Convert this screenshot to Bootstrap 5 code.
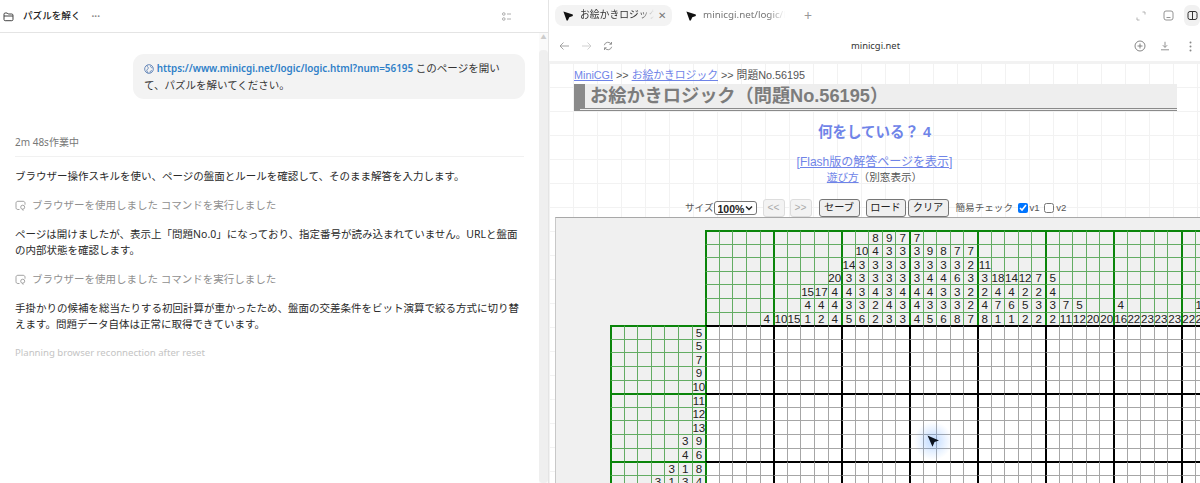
<!doctype html>
<html lang="ja">
  <head>
    <meta charset="UTF-8" />
    <meta name="viewport" content="width=device-width, initial-scale=1" />
    <title>パズルを解く</title>
    <link href="https://cdn.jsdelivr.net/npm/bootstrap@5.3.0/dist/css/bootstrap.min.css" rel="stylesheet" />
    <style>
      html, body { height: 483px; overflow: hidden; }
      body { font-family: "Noto Sans", "Noto Sans CJK JP", sans-serif; font-size: 10.5px; color: #333; background: #fff; }

      /* left: chat pane */
      .chat-pane { width: 549px; height: 483px; flex: none; border-right: 1px solid #e4e4e4; }
      .chat-head { height: 33px; padding: 0 37px 0 3px; border-bottom: 1px solid #e4e4e4; }
      .chat-title { font-size: 9.6px; font-weight: 500; color: #222; margin-left: 9px; }
      .chat-dots { margin-left: 11px; color: #888; font-size: 10px; line-height: 1; font-weight: 700; }
      .chat-body { padding: 21px 15px 0; width: 539px; height: 450px; }
      .chat-scroll { width: 9px; background: #fafafa; height: 450px; }
      .chat-scroll-up { height: 17px; color: #ccc; font-size: 6px; }
      .chat-scroll-thumb { background: #efefef; border-radius: 4px; }
      .bubble { width: 392px; height: 45px; margin-left: 118px; padding: 6px 11px; background: #f3f3f3; border-radius: 11px; line-height: 17px; }
      .bubble a { color: #2f80c8; font-weight: 600; text-decoration: none; font-size: 9.9px; }
      .work-time { margin-top: 36px; padding-bottom: 6px; color: #777; font-size: 10px; line-height: 15px; border-bottom: 1px solid #f1f1f1; }
      .chat-text { margin: 0; line-height: 16.5px; color: #2a2a2a; }
      .first-text { margin-top: 11px; }
      .tool-row { margin: 12px 0 12px; line-height: 17px; color: #8f8f8f; }
      .tool-row svg { margin-right: 6px; }
      .fade-text { margin-top: 12px; line-height: 16px; color: #c4c4c4; font-size: 9.6px; }

      /* right: browser pane */
      .browser-pane { min-width: 0; height: 483px; }
      .tab-bar { height: 31px; padding: 5px 0 0 6px; }
      .tab-item { height: 21px; padding-left: 8px; border-radius: 8px; font-size: 9.8px; color: #333; }
      .tab-active { width: 117px; background: #f3f3f3; }
      .tab-other { width: 120px; margin-left: 6px; color: #777; }
      .tab-text { margin-left: 7px; width: 74px; overflow: hidden; white-space: nowrap; -webkit-mask-image: linear-gradient(90deg, #000 80%, transparent); mask-image: linear-gradient(90deg, #000 80%, transparent); }
      .tab-other .tab-text { width: 82px; }
      .tab-x { margin-left: 4px; color: #777; font-size: 10px; }
      .tab-plus { margin-left: 6px; color: #999; font-size: 14px; line-height: 1; }
      .win-group { height: 21px; }
      .win-btn { width: 27px; height: 21px; border-radius: 6px; }
      .win-active { background: #f1f1f1; width: 16px; margin-left: 2.5px; justify-content: flex-start !important; padding-left: 3px; }
      .tool-bar { height: 32px; border-bottom: 2px solid #f2f2f2; padding: 0 0 0 10px; }
      .tool-icon { width: 22px; }
      .url-text { flex: 1; padding-right: 8px; text-align: center; font-size: 9.4px; color: #333; }
      .tool-right { width: 26px; }
      .dots-wrap { width: 14px; padding-left: 3px; }

      /* web page in the browser */
      .web-page {
        height: 420px; overflow: hidden; position: relative; color: #555; font-family: "Liberation Sans", "Noto Sans CJK JP", sans-serif;
        background-color: #fff;
        background-image:
          linear-gradient(90deg, #f2f2f2 1px, transparent 1px),
          linear-gradient(#f2f2f2 1px, transparent 1px);
        background-size: 24px 24px, 24px 24px;
      }
      .web-page a { color: #6f84e8; }
      .crumbs { padding: 5px 0 0 25px; font-size: 10.8px; line-height: 14px; }
      .page-title { margin: 2px 23px 0 25px; height: 27px; padding-left: 5px; background: #eee; border-left: 11px solid #8a8a8a; border-bottom: 3px double #8a8a8a; font-size: 18.2px; line-height: 25px; font-weight: 700; color: #7c7c7c; white-space: nowrap; }
      .quiz-name { margin-top: 11px; text-align: center; font-size: 14.5px; line-height: 20px; font-weight: 700; color: #6f84e8; }
      .flash-link { margin-top: 12px; text-align: center; font-size: 12px; line-height: 17px; }
      .howto { text-align: center; font-size: 10.6px; line-height: 13px; }
      .ctrl-bar { margin-top: 16px; height: 16px; padding-left: 136px; font-size: 9.6px; white-space: nowrap; }
      .size-select {
        width: 43px; height: 14px; padding: 0 0 0 3px; font-size: 10.5px; font-weight: 600; color: #222; border: 1px solid #767676; border-radius: 3px; font-family: "Liberation Sans", sans-serif;
        appearance: none;
        background: #fff url("data:image/svg+xml,%3Csvg xmlns='http://www.w3.org/2000/svg' width='8' height='6'%3E%3Cpath d='M1 1.500 4 4.500 7 1.500' fill='none' stroke='%23222' stroke-width='1.500'/%3E%3C/svg%3E") no-repeat right 3px center;
      }
      .pz-btn { height: 18px; padding: 0; border: 1px solid #767676; border-radius: 3px; background: #efefef; color: #222; font-size: 10.2px; line-height: 16px; }
      .pz-btn:disabled { border-color: #ddd; background: #f3f3f3; color: #aaa; opacity: 1; }
      .btn-a { width: 22px; margin-left: 6px; }
      .btn-b { width: 22px; margin-left: 5px; }
      .btn-c { width: 41px; margin-left: 7px; }
      .btn-d { width: 40px; margin-left: 6px; }
      .btn-e { width: 41px; margin-left: 2px; }
      .check-label { margin-left: 7px; }
      .check-box { width: 10px; height: 10px; margin: 0 2px 0 4.5px; }

      /* puzzle board */
      .board-panel { margin: 1px 0 0 6px; height: 270px; padding: 12px 0 0 54px; background: #f0f0f0; border-top: 1px solid #a8a8a8; border-left: 1px solid #c8c8c8; overflow: hidden; }
      .board-grid { display: grid; grid-template-columns: repeat(44, 13.6px); grid-auto-rows: 13.6px; width: 598.4px; font-family: "Liberation Sans", sans-serif; font-size: 11.6px; color: #222; }
      .corner-gap { grid-column: span 7; }
      .cell-clue, .cell-play { display: flex; align-items: center; justify-content: center; white-space: nowrap; line-height: 1; }
      .cell-clue { border-left: 1px solid #63ac63; border-top: 1px solid #63ac63; }
      .cell-play { background: #fff; border-left: 1px solid #a6a6a6; border-top: 1px solid #a6a6a6; }
      .cell-clue.edge-l { border-left: 2px solid #0a840a; }
      .cell-clue.edge-t { border-top: 2px solid #0a840a; }
      .cell-play.edge-l { border-left: 2px solid #000; }
      .cell-play.edge-t { border-top: 2px solid #000; }
      .cell-play.green-l { border-left: 2px solid #0a840a; }
      .arrow-mark { position: absolute; left: 364px; top: 358px; width: 40px; height: 40px; background: radial-gradient(circle, rgba(90,160,255,.4) 0, rgba(90,160,255,.12) 45%, transparent 68%); }
    </style>
  </head>
  <body>
    <div class="d-flex">
      <!-- Chat side -->
      <div class="chat-pane">
        <div class="chat-head d-flex align-items-center">
          <svg width="11" height="11" viewBox="0 0 11 11" fill="none" stroke="#444" stroke-width="1"><path d="M1 3.200c0-.8.5-1.200 1.200-1.200h2l1 1h3.600c.7 0 1.200.5 1.200 1.200v4.300c0 .8-.5 1.200-1.200 1.200H2.200C1.500 9.700 1 9.300 1 8.500z"/><path d="M1 5h9"/></svg>
          <span class="chat-title">パズルを解く</span>
          <span class="chat-dots">···</span>
          <svg class="ms-auto" width="9" height="9" viewBox="0 0 9 9" fill="none" stroke="#999" stroke-width=".8"><circle cx="1.800" cy="2" r="1.300"/><circle cx="1.800" cy="7" r="1.300"/><path d="M5 2h4M5 7h4"/></svg>
        </div>
        <div class="d-flex">
          <div class="chat-body">
            <div class="bubble">
              <svg width="10" height="10" viewBox="0 0 9 9" fill="none" stroke="#5b7fb5" stroke-width=".8"><circle cx="4.500" cy="4.500" r="3.900"/><path d="M3 1.200c-.5 1.300.9 1.500.9 2.500S2.300 4.800 2.500 6c.1.900 1 1.200 1.200 2.300M6 1.400C5.400 2.500 6.500 3.500 7.800 3.500M5.500 8c-.3-1.300.4-2 1.800-2"/></svg>
              <a href="#">https://www.minicgi.net/logic/logic.html?num=56195</a> このページを開いて、パズルを解いてください。
            </div>
            <div class="work-time">2m 48s作業中</div>
            <p class="chat-text first-text">ブラウザー操作スキルを使い、ページの盤面とルールを確認して、そのまま解答を入力します。</p>
            <div class="tool-row">
              <svg width="11" height="11" viewBox="0 0 11 11" fill="none" stroke="#999" stroke-width=".9"><path d="M4.500 9.500H3C1.700 9.500 1 8.800 1 7.500V3.200C1 2 1.700 1.300 3 1.300h5c1.200 0 2 .7 2 1.900v1.500"/><circle cx="7.700" cy="7.200" r="2"/><path d="M7 9.500l1.500.8"/></svg>ブラウザーを使用しました コマンドを実行しました
            </div>
            <p class="chat-text">ページは開けましたが、表示上「問題No.0」になっており、指定番号が読み込まれていません。URLと盤面<br />の内部状態を確認します。</p>
            <div class="tool-row">
              <svg width="11" height="11" viewBox="0 0 11 11" fill="none" stroke="#999" stroke-width=".9"><path d="M4.500 9.500H3C1.700 9.500 1 8.800 1 7.500V3.200C1 2 1.700 1.300 3 1.300h5c1.200 0 2 .7 2 1.900v1.500"/><circle cx="7.700" cy="7.200" r="2"/><path d="M7 9.500l1.500.8"/></svg>ブラウザーを使用しました コマンドを実行しました
            </div>
            <p class="chat-text">手掛かりの候補を総当たりする初回計算が重かったため、盤面の交差条件をビット演算で絞る方式に切り替<br />えます。問題データ自体は正常に取得できています。</p>
            <div class="fade-text">Planning browser reconnection after reset</div>
          </div>
          <div class="chat-scroll d-flex flex-column">
            <div class="chat-scroll-up text-center">▲</div>
            <div class="chat-scroll-thumb flex-grow-1"></div>
          </div>
        </div>
      </div>

      <!-- Browser side -->
      <div class="browser-pane flex-grow-1">
        <div class="tab-bar d-flex align-items-start">
          <div class="tab-item tab-active d-flex align-items-center">
            <svg width="10" height="10" viewBox="0 0 10 10"><path fill="#111" d="M.4.600 9.800 3.600V5L6.300 6.300 4.800 9.600H3.600z"/></svg>
            <span class="tab-text">お絵かきロジック</span>
            <span class="tab-x">✕</span>
          </div>
          <div class="tab-item tab-other d-flex align-items-center">
            <svg width="10" height="10" viewBox="0 0 10 10"><path fill="#111" d="M.4.600 9.800 3.600V5L6.300 6.300 4.800 9.600H3.600z"/></svg>
            <span class="tab-text">minicgi.net/logic/logic</span>
          </div>
          <span class="tab-plus mt-1">+</span>
          <div class="ms-auto d-flex align-items-center win-group">
            <div class="win-btn d-flex align-items-center justify-content-center">
              <svg width="10" height="10" viewBox="0 0 10 10" fill="none" stroke="#aaa" stroke-width=".9"><path d="M6.500 1H9v2.500M3.500 9H1V6.500"/></svg>
            </div>
            <div class="win-btn d-flex align-items-center justify-content-center">
              <svg width="11" height="11" viewBox="0 0 11 11" fill="none" stroke="#888" stroke-width=".9"><rect x="1" y="1" width="9" height="9" rx="2"/><path d="M3.500 7.500h4"/></svg>
            </div>
            <div class="win-btn win-active d-flex align-items-center justify-content-center">
              <svg width="11" height="11" viewBox="0 0 11 11" fill="none" stroke="#333" stroke-width="1"><rect x="1" y="1.500" width="9" height="8" rx="2"/><path d="M5.500 1.500v8"/></svg>
            </div>
          </div>
        </div>
        <div class="tool-bar d-flex align-items-center">
          <div class="tool-icon">
            <svg width="11" height="10" viewBox="0 0 11 10" fill="none" stroke="#999" stroke-width=".9"><path d="M10 5H1.200M4.500 1.500 1 5l3.500 3.500"/></svg>
          </div>
          <div class="tool-icon">
            <svg width="11" height="10" viewBox="0 0 11 10" fill="none" stroke="#ccc" stroke-width=".9"><path d="M1 5h8.800M6.500 1.500 10 5 6.500 8.500"/></svg>
          </div>
          <div class="tool-icon">
            <svg width="10" height="10" viewBox="0 0 10 10" fill="none" stroke="#888" stroke-width=".9"><path d="M1.300 4.200A3.800 3.800 0 0 1 8.200 3M8.700 5.800A3.800 3.800 0 0 1 1.800 7M8.500 1v2.200H6.300M1.500 9V6.800h2.200"/></svg>
          </div>
          <div class="url-text">minicgi.net</div>
          <div class="tool-right">
            <svg width="12" height="12" viewBox="0 0 12 12" fill="none" stroke="#777" stroke-width=".9"><circle cx="6" cy="6" r="5"/><path d="M6 3.500v5M3.500 6h5"/></svg>
          </div>
          <div class="tool-right">
            <svg width="10" height="10" viewBox="0 0 10 10" fill="none" stroke="#888" stroke-width=".9"><path d="M5 .8v5.500M2.800 4.200 5 6.400l2.200-2.200M1 8.800h8"/></svg>
          </div>
          <div class="dots-wrap">
            <svg width="3" height="11" viewBox="0 0 3 11" fill="#888"><circle cx="1.500" cy="1.500" r="1"/><circle cx="1.500" cy="5.500" r="1"/><circle cx="1.500" cy="9.500" r="1"/></svg>
          </div>
        </div>
        <div class="web-page">
          <div class="crumbs"><a href="#">MiniCGI</a> &gt;&gt; <a href="#">お絵かきロジック</a> &gt;&gt; 問題No.56195</div>
          <div class="page-title">お絵かきロジック（問題No.56195）</div>
          <div class="quiz-name">何をしている？ 4</div>
          <div class="flash-link"><a href="#">[Flash版の解答ページを表示]</a></div>
          <div class="howto"><a href="#">遊び方</a>（別窓表示）</div>
          <div class="ctrl-bar d-flex align-items-center">
            <span>サイズ</span>
            <select class="size-select"><option>100%</option></select>
            <button class="pz-btn btn-a" disabled>&lt;&lt;</button>
            <button class="pz-btn btn-b" disabled>&gt;&gt;</button>
            <button class="pz-btn btn-c">セーブ</button>
            <button class="pz-btn btn-d">ロード</button>
            <button class="pz-btn btn-e">クリア</button>
            <span class="check-label">簡易チェック</span>
            <input class="check-box" type="checkbox" checked /><span>v1</span>
            <input class="check-box" type="checkbox" /><span>v2</span>
          </div>
          <div class="board-panel">
            <div class="board-grid" id="board"></div>
          </div>
          <div class="arrow-mark d-flex align-items-center justify-content-center">
            <svg width="14" height="14" viewBox="0 0 14 14"><path fill="#0c1420" d="M1.500 1.500 13 6.500 8.500 8 6.500 12.800z"/></svg>
          </div>
        </div>
      </div>
    </div>

    <script>
      // Column clues, one line per clue row: {column: value}
      const topClues = [
        { 12: 8, 13: 9, 14: 7, 15: 7 },
        { 11: 10, 12: 4, 13: 3, 14: 3, 15: 3, 16: 9, 17: 8, 18: 7, 19: 7 },
        { 10: 14, 11: 3, 12: 3, 13: 3, 14: 3, 15: 3, 16: 3, 17: 3, 18: 3, 19: 2, 20: 11 },
        { 9: 20, 10: 3, 11: 3, 12: 3, 13: 3, 14: 3, 15: 3, 16: 4, 17: 4, 18: 6, 19: 3, 20: 3, 21: 18, 22: 14, 23: 12, 24: 7, 25: 5 },
        { 7: 15, 8: 17, 9: 4, 10: 4, 11: 3, 12: 4, 13: 3, 14: 4, 15: 4, 16: 4, 17: 3, 18: 3, 19: 2, 20: 2, 21: 4, 22: 4, 23: 2, 24: 2, 25: 4 },
        { 7: 4, 8: 4, 9: 4, 10: 3, 11: 3, 12: 2, 13: 4, 14: 3, 15: 4, 16: 3, 17: 3, 18: 3, 19: 2, 20: 4, 21: 7, 22: 6, 23: 5, 24: 3, 25: 3, 26: 7, 27: 5, 30: 4, 36: 10 },
        { 4: 4, 5: 10, 6: 15, 7: 1, 8: 2, 9: 4, 10: 5, 11: 6, 12: 2, 13: 3, 14: 3, 15: 4, 16: 5, 17: 6, 18: 8, 19: 7, 20: 8, 21: 1, 22: 1, 23: 2, 24: 2, 25: 2, 26: 11, 27: 12, 28: 20, 29: 20, 30: 16, 31: 22, 32: 23, 33: 23, 34: 23, 35: 22, 36: 22 }
      ];
      // Row clues, right aligned against the board
      const leftClues = [[5], [5], [7], [9], [10], [11], [12], [13], [3, 9], [4, 6], [3, 1, 8], [3, 1, 3, 4]];
      const LEFT = 7, COLS = 37;

      let html = "";
      topClues.forEach((row, r) => {
        html += `<div class="corner-gap"></div>`;
        for (let c = 0; c < COLS; c++) {
          const cls = (c % 5 === 0 ? " edge-l" : "") + (r === 0 ? " edge-t" : "");
          html += `<div class="cell-clue${cls}">${row[c] ?? ""}</div>`;
        }
      });
      leftClues.forEach((clue, r) => {
        const rowTop = r % 5 === 0;
        for (let c = 0; c < LEFT; c++) {
          const v = clue[c - (LEFT - clue.length)];
          const cls = (c === 0 ? " edge-l" : "") + (rowTop ? " edge-t" : "");
          html += `<div class="cell-clue${cls}">${v ?? ""}</div>`;
        }
        for (let c = 0; c < COLS; c++) {
          const cls = (c === 0 ? " green-l" : c % 5 === 0 ? " edge-l" : "") + (rowTop ? " edge-t" : "");
          html += `<div class="cell-play${cls}"></div>`;
        }
      });
      document.getElementById("board").innerHTML = html;
    </script>
    <script src="https://cdn.jsdelivr.net/npm/bootstrap@5.3.0/dist/js/bootstrap.bundle.min.js"></script>
  </body>
</html>
